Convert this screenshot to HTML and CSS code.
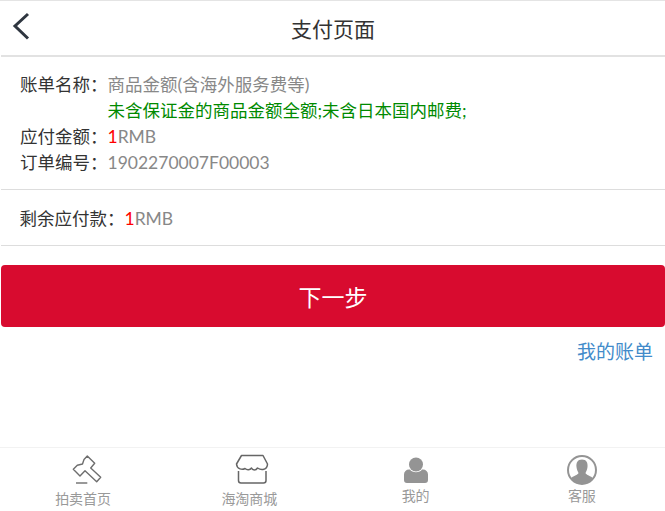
FILE: index.html
```html
<!DOCTYPE html>
<html lang="zh-CN">
<head>
<meta charset="utf-8">
<title>支付页面</title>
<link rel="stylesheet" href="styles.css">
</head>
<body>
<div class="page">
  <header class="topbar">
    <svg class="back" viewBox="0 0 18 28" width="18" height="28"><path d="M16 2 3 14 16 26.500" fill="none" stroke="#2f3640" stroke-width="3"/></svg>
    <h1 class="title">支付页面</h1>
  </header>
  <section class="info">
    <div class="row"><span class="label">账单名称：</span><span class="value">商品金额(含海外服务费等)</span></div>
    <div class="row"><span class="label"></span><span class="note">未含保证金的商品金额全额;未含日本国内邮费;</span></div>
    <div class="row"><span class="label">应付金额：</span><span class="value"><em class="num">1</em>RMB</span></div>
    <div class="row"><span class="label">订单编号：</span><span class="value">1902270007F00003</span></div>
  </section>
  <section class="remain">
    <span class="label-auto">剩余应付款：</span><span class="value"><em class="num">1</em>RMB</span>
  </section>
  <button class="next" type="button">下一步</button>
  <div class="links"><a class="bill" href="#">我的账单</a></div>
  <nav class="tabs">
    <a class="tab" href="#">
      <svg class="icon" viewBox="-3 0 40 40" width="40" height="40"><path d="M21.300 6 28.700 13.300 24.700 18 34.700 27.300 30.700 31.700 19 20.700 14 26 7.300 19.300 11.300 15.300 16.500 14 18 9.500Z" fill="none" stroke="#6e6e6e" stroke-width="1.400" stroke-linejoin="round"/><path d="M10 33h11.300" stroke="#777" stroke-width="1.500"/></svg>
      <span>拍卖首页</span>
    </a>
    <a class="tab" href="#">
      <svg class="icon" viewBox="-3 0 40 40" width="40" height="40"><path d="M9.500 5.500H31L35.500 14C35.500 17 34 19 31 19.500C28.500 20 27 19 25.500 18C24 20.500 20.500 20.500 19.500 18C18 20 15 20.500 13 18.500C10.500 20 5 19.500 4.500 14Z" fill="none" stroke="#666" stroke-width="1.500" stroke-linejoin="round"/><path d="M6.500 21V30.500A2.500 2.500 0 0 0 9 33H31.500A2.500 2.500 0 0 0 34 30.500V21" fill="none" stroke="#666" stroke-width="1.500"/></svg>
      <span>海淘商城</span>
    </a>
    <a class="tab tab-high" href="#">
      <svg class="icon" viewBox="0 0 40 40" width="40" height="40"><circle cx="20" cy="14.500" r="7" fill="#949494"/><path d="M14 19.500C16 23 24 23 26 19.500H27A5 5 0 0 1 32 24.500V30A3 3 0 0 1 29 33H11A3 3 0 0 1 8 30V24.500A5 5 0 0 1 13 19.500Z" fill="#949494"/></svg>
      <span>我的</span>
    </a>
    <a class="tab tab-high" href="#">
      <svg class="icon" viewBox="0 0 40 40" width="40" height="40"><circle cx="20" cy="20" r="14" fill="#fff" stroke="#949494" stroke-width="2"/><path d="M20 9.500C24.500 9.500 26 13 25.500 17C25.200 19.500 24.500 21 23.500 23C24 25 29 26 31.500 28.500C28.500 32 24.500 33.500 20 33.500C15.500 33.500 11.500 32 8.500 28.500C11 26 16 25 16.500 23C15.500 21 14.800 19.500 14.500 17C14 13 15.500 9.500 20 9.500Z" fill="#949494"/></svg>
      <span>客服</span>
    </a>
  </nav>
</div>
</body>
</html>
```
FILE: styles.css
```css
* { box-sizing: border-box; }
html, body { margin: 0; padding: 0; background: #fff; }
body { font-family: "Lato", "Noto Sans CJK SC", sans-serif; font-size: 17.5px; color: #333; }
.page { width: 665px; height: 511px; position: relative; overflow: hidden; border-top: 1px solid #e4e4e4; }
.topbar { height: 56px; display: flex; align-items: center; justify-content: center; position: relative; margin-left: 1px; border-bottom: 2px solid #e2e2e2; }
.back { position: absolute; left: 11px; top: 11px; }
.title { margin: 0; font-size: 21px; font-weight: 400; color: #333; }
.info { padding: 15px 0 13px 19px; border-bottom: 1px solid #ddd; margin-left: 1px; }
.row { display: flex; height: 26px; line-height: 26px; }
.label { width: 87.5px; flex: none; color: #333; white-space: nowrap; }
.value { color: #888; white-space: nowrap; }
.note { color: #008a00; white-space: nowrap; }
.num { font-style: normal; color: #f00; }
.remain { margin-left: 1px; padding-left: 18.5px; height: 56px; line-height: 58px; border-bottom: 1px solid #ddd; }
.label-auto { color: #333; }
.next { display: block; margin: 19px 0 0 1px; width: 664px; height: 62px; border: 0; border-radius: 4px; background: #d80b2f; color: #fff; font: inherit; font-size: 23px; }
.links { text-align: right; padding-right: 12px; margin-top: 12px; line-height: 26px; }
.bill { color: #428bca; text-decoration: none; font-size: 19px; }
.tabs { position: absolute; left: 0; right: 0; bottom: 0; height: 64px; border-top: 1px solid #f2f2f2; display: grid; grid-template-columns: repeat(4, 1fr); background: #fff; }
.tab { display: flex; flex-direction: column; align-items: center; text-decoration: none; color: #999; font-size: 14px; line-height: 18px; padding-top: 2px; }
.icon { display: block; flex: none; }
.tab-high span { margin-top: -3px; }
```
